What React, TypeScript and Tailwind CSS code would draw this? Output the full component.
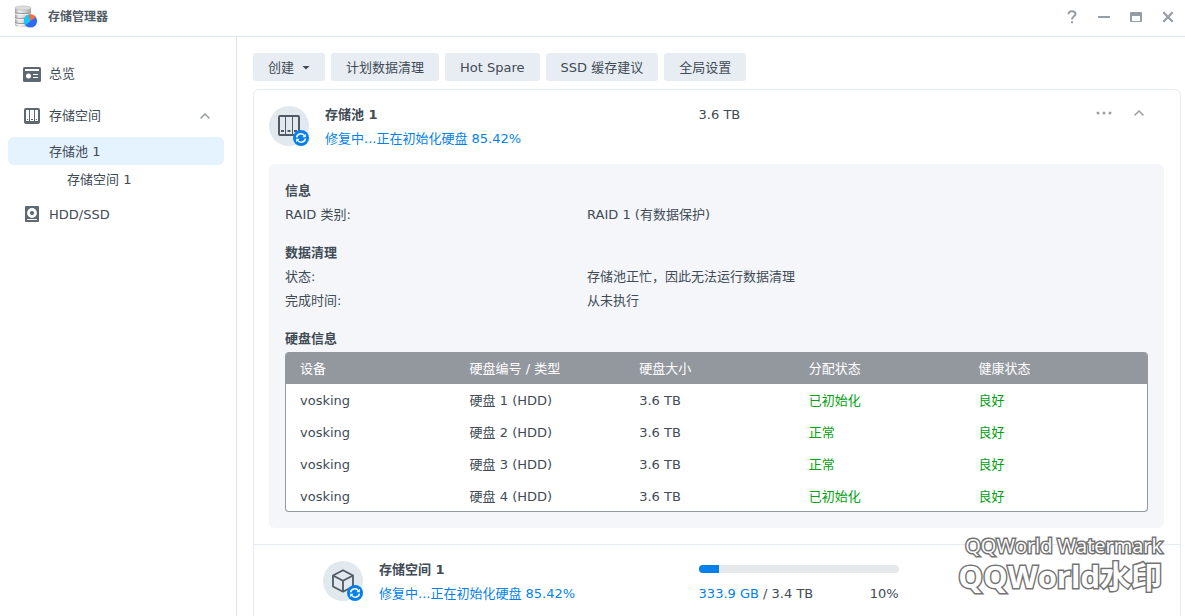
import type { ReactNode } from "react";

const disks = [
    { device: "vosking", name: "硬盘 1 (HDD)", size: "3.6 TB", status: "已初始化", health: "良好" },
    { device: "vosking", name: "硬盘 2 (HDD)", size: "3.6 TB", status: "正常", health: "良好" },
    { device: "vosking", name: "硬盘 3 (HDD)", size: "3.6 TB", status: "正常", health: "良好" },
    { device: "vosking", name: "硬盘 4 (HDD)", size: "3.6 TB", status: "已初始化", health: "良好" },
];

const toolbar = ["创建", "计划数据清理", "Hot Spare", "SSD 缓存建议", "全局设置"];

function AppLogo() {
    return (
        <svg width="24" height="24" viewBox="0 0 24 24" aria-hidden="true">
            <defs>
                <linearGradient id="steel" x1="0" x2="1">
                    <stop offset="0" stopColor="#a3a3a3" />
                    <stop offset="0.25" stopColor="#f0f0f0" />
                    <stop offset="0.6" stopColor="#d2d2d2" />
                    <stop offset="1" stopColor="#a6a6a6" />
                </linearGradient>
            </defs>
            <path d="M1 3v17c0 1.200 3.500 2 8 2s8-.8 8-2V3z" fill="url(#steel)" />
            <ellipse cx="9" cy="3" rx="8" ry="2" fill="#dedede" stroke="#b4b4b4" strokeWidth="0.6" />
            <path d="M1 7c0 1.200 3.500 1.500 8 1.500s8-.3 8-1.500M1 12c0 1.200 3.500 1.500 8 1.500s8-.3 8-1.500M1 17c0 1.200 3.500 1.500 8 1.500s8-.3 8-1.500" fill="none" stroke="#8a8a8a" strokeWidth="0.9" />
            <path d="M1 8.200c0 1.200 3.500 1.500 8 1.500s8-.3 8-1.500M1 13.200c0 1.200 3.500 1.500 8 1.500s8-.3 8-1.500M1 18.200c0 1.200 3.500 1.500 8 1.500s8-.3 8-1.500" fill="none" stroke="#fafafa" strokeWidth="0.9" />
            <circle cx="16.500" cy="16" r="6.600" fill="#2f6bf5" />
            <path d="M16.500 16L14.800 9.600A6.600 6.600 0 0 0 11.400 20.200z" fill="#1cc8f5" />
            <path d="M16.500 16L14.800 9.600A6.600 6.600 0 0 1 21.800 12z" fill="#ff6d33" />
        </svg>
    );
}

function OverviewIcon() {
    return (
        <svg width="18" height="15" viewBox="0 0 18 15" aria-hidden="true">
            <rect width="18" height="15" rx="1.500" fill="#5d6873" />
            <path d="M2 2h14v2H2z" fill="#fff" />
            <circle cx="5.500" cy="9" r="2.500" fill="#fff" />
            <path d="M10 7h5v1h-5zM10 10h5v1h-5z" fill="#fff" />
        </svg>
    );
}

function StorageIcon() {
    return (
        <svg width="16" height="16" viewBox="0 0 16 16" aria-hidden="true">
            <rect width="16" height="16" rx="2" fill="#5d6873" />
            <path d="M2 2h3v11H2zM6 2h4v11H6zM11 2h3v11h-3z" fill="#fff" />
            <path d="M3 11h1v1H3zM7 11h2v1H7zM12 11h1v1h-1z" fill="#5d6873" />
        </svg>
    );
}

function DriveIcon() {
    return (
        <svg width="14" height="16" viewBox="0 0 14 16" aria-hidden="true">
            <rect width="14" height="16" rx="1" fill="#5d6873" />
            <circle cx="7" cy="7" r="3.500" fill="none" stroke="#fff" strokeWidth="2.800" />
            <path d="M2 13h10v1H2z" fill="#fff" />
        </svg>
    );
}

function Chevron() {
    return (
        <svg width="10" height="6" viewBox="0 0 10 6" fill="none" stroke="#9ca1a7" strokeWidth="1.500" aria-hidden="true">
            <path d="M0.600 5.400L5 1l4.400 4.400" />
        </svg>
    );
}

function PoolGlyph() {
    return (
        <svg width="24" height="24" viewBox="0 0 24 24" aria-hidden="true">
            <rect x="2" y="2" width="20" height="19" rx="1" fill="none" stroke="#4f5a65" strokeWidth="2" />
            <path d="M8 2h1v18H8zM15 2h1v18h-1z" fill="#4f5a65" />
            <path d="M4 16h3v2H4zM10.500 16h3v2h-3zM17 16h3v2h-3z" fill="#4f5a65" />
        </svg>
    );
}

function VolumeGlyph() {
    return (
        <svg width="24" height="24" viewBox="0 0 24 24" fill="none" stroke="#4f5a65" strokeWidth="1.800" strokeLinejoin="round" aria-hidden="true">
            <path d="M12 1.300L22 6.500v11L12 22.700 2 17.500v-11z" />
            <path d="M2 6.500L12 11.700l10-5.200M12 11.700v11" />
        </svg>
    );
}

function StatusIcon({ children }: { children: ReactNode }) {
    return (
        <div className="relative mt-[3px] flex size-10 shrink-0 items-center justify-center rounded-full bg-[#e1e8ee]">
            {children}
            <svg className="absolute right-0 bottom-0" width="16" height="16" viewBox="0 0 16 16" aria-hidden="true">
                <circle cx="8" cy="8" r="8" fill="#057feb" />
                <path d="M3.600 7.300C4 3.600 9 2.500 11.400 5.600M12.400 8.700C12 12.400 7 13.500 4.600 10.400" fill="none" stroke="#fff" strokeWidth="1.500" />
                <path d="M12.800 3.800v3.400H9.400zM3.200 12.200V8.800h3.400z" fill="#fff" />
            </svg>
        </div>
    );
}

function InfoRow({ label, value }: { label: string; value: string }) {
    return (
        <div className="flex">
            <dt className="w-[35%]">{label}</dt>
            <dd>{value}</dd>
        </div>
    );
}

function Sidebar() {
    return (
        <nav className="w-[237px] shrink-0 border-r border-[#dfe6ee] pt-[23px] pr-3 pl-2">
            <a href="#overview" className="mb-[14px] flex h-7 items-center rounded">
                <span className="flex w-[41px] justify-center pl-[7px]"><OverviewIcon /></span>
                总览
            </a>
            <a href="#storage" className="mb-[7px] flex h-7 items-center rounded pr-[14px]">
                <span className="flex w-[41px] justify-center pl-[7px]"><StorageIcon /></span>
                存储空间
                <span className="ml-auto"><Chevron /></span>
            </a>
            <a href="#pool-1" className="flex h-7 items-center rounded-md bg-[#e5f2ff] pt-0.5 pl-[41px]">存储池 1</a>
            <a href="#volume-1" className="mb-[7px] flex h-7 items-center rounded-md pt-0.5 pl-[59px]">存储空间 1</a>
            <a href="#hdd" className="flex h-7 items-center rounded pt-0.5">
                <span className="flex w-[41px] justify-center pb-0.5 pl-[7px]"><DriveIcon /></span>
                HDD/SSD
            </a>
        </nav>
    );
}

function WindowControls() {
    return (
        <div className="ml-auto flex pr-px text-[#969ca3]">
            <button aria-label="帮助" className="flex size-8 items-center justify-center">
                <svg width="10" height="14" viewBox="0 0 10 14" fill="none" stroke="currentColor" strokeWidth="2">
                    <path d="M1.500 4.300C1.500 2.300 2.900 1.300 5 1.300s3.500 1.100 3.500 2.800C8.500 6.300 5 6.400 5 9.500" />
                    <path d="M5 11.200v2" />
                </svg>
            </button>
            <button aria-label="最小化" className="flex size-8 items-center justify-center">
                <svg width="12" height="2" viewBox="0 0 12 2"><rect width="12" height="2" rx="0.500" fill="currentColor" /></svg>
            </button>
            <button aria-label="最大化" className="flex size-8 items-center justify-center">
                <svg width="12" height="10" viewBox="0 0 12 10"><path fillRule="evenodd" d="M1 0h10a1 1 0 0 1 1 1v8a1 1 0 0 1-1 1H1a1 1 0 0 1-1-1V1a1 1 0 0 1 1-1zM2 4v5h8V4z" fill="currentColor" /></svg>
            </button>
            <button aria-label="关闭" className="flex size-8 items-center justify-center">
                <svg width="12" height="12" viewBox="0 0 12 12" stroke="currentColor" strokeWidth="2.200"><path d="M1.300 1.300l9.400 9.400M10.700 1.300l-9.400 9.400" /></svg>
            </button>
        </div>
    );
}

function DiskTable() {
    return (
        <div className="mt-px overflow-hidden rounded border border-t-0 border-[#93989f] bg-white">
            <table className="w-full table-fixed text-left">
                <thead className="bg-[#93989f] text-white">
                    <tr className="h-8">
                        <th className="w-[19.7%] pt-0.5 pl-[14px] font-normal">设备</th>
                        <th className="w-[19.7%] pt-0.5 pl-[14px] font-normal">硬盘编号 / 类型</th>
                        <th className="w-[19.7%] pt-0.5 pl-[14px] font-normal">硬盘大小</th>
                        <th className="w-[19.7%] pt-0.5 pl-[14px] font-normal">分配状态</th>
                        <th className="pt-0.5 pl-[14px] font-normal">健康状态</th>
                    </tr>
                </thead>
                <tbody>
                    {disks.map((disk) => (
                        <tr key={disk.name} className="h-8 last:h-[31px]">
                            <td className="pt-0.5 pl-[14px]">{disk.device}</td>
                            <td className="pt-0.5 pl-[14px]">{disk.name}</td>
                            <td className="pt-0.5 pl-[14px]">{disk.size}</td>
                            <td className="pt-0.5 pl-[14px] text-[#00a111]">{disk.status}</td>
                            <td className="pt-0.5 pl-[14px] text-[#00a111]">{disk.health}</td>
                        </tr>
                    ))}
                </tbody>
            </table>
        </div>
    );
}

function PoolCard() {
    return (
        <section className="rounded-md border border-[#e6ebf1] pb-8">
            <div className="pt-[13px] pr-4 pl-[15px]">
                <header className="flex">
                    <div className="flex w-[48%] items-start gap-4">
                        <StatusIcon><PoolGlyph /></StatusIcon>
                        <div>
                            <h2 className="font-bold">存储池 1</h2>
                            <p className="text-[#057feb]">修复中...正在初始化硬盘 85.42%</p>
                        </div>
                    </div>
                    <p>3.6 TB</p>
                    <div className="ml-auto flex items-start gap-[11px] pr-[13px]">
                        <button aria-label="更多" className="flex h-5 w-6 items-center justify-center">
                            <svg width="16" height="4" viewBox="0 0 16 4" fill="#9ca1a7">
                                <circle cx="2" cy="2" r="1.500" />
                                <circle cx="8" cy="2" r="1.500" />
                                <circle cx="14" cy="2" r="1.500" />
                            </svg>
                        </button>
                        <button aria-label="折叠" className="flex h-5 w-6 items-center justify-center"><Chevron /></button>
                    </div>
                </header>

                <div className="mt-[13px] mb-4 rounded-md bg-[#f4f6fa] px-4 pt-[15px] pb-4">
                    <h3 className="font-bold">信息</h3>
                    <dl>
                        <InfoRow label="RAID 类别:" value="RAID 1 (有数据保护)" />
                    </dl>
                    <h3 className="mt-[14px] font-bold">数据清理</h3>
                    <dl>
                        <InfoRow label="状态:" value="存储池正忙，因此无法运行数据清理" />
                        <InfoRow label="完成时间:" value="从未执行" />
                    </dl>
                    <h3 className="mt-[14px] font-bold">硬盘信息</h3>
                    <DiskTable />
                </div>
            </div>

            <div className="flex border-t border-[#e6ebf1] pt-[13px] pr-4 pl-[15px]">
                <div className="flex w-[48%] items-start gap-4 pl-[54px]">
                    <StatusIcon><VolumeGlyph /></StatusIcon>
                    <div>
                        <h2 className="font-bold">存储空间 1</h2>
                        <p className="text-[#057feb]">修复中...正在初始化硬盘 85.42%</p>
                    </div>
                </div>
                <div className="w-[200px]">
                    <div className="flex h-6 items-center pb-0.5">
                        <div role="progressbar" aria-label="存储空间 1" aria-valuenow={10} className="h-2 w-full overflow-hidden rounded-full bg-[#e6e8eb]">
                            <div className="h-full w-[10%] bg-[#057feb]" />
                        </div>
                    </div>
                    <div className="flex justify-between">
                        <p><span className="text-[#057feb]">333.9 GB</span> / 3.4 TB</p>
                        <p>10%</p>
                    </div>
                </div>
            </div>
        </section>
    );
}

export default function App() {
    return (
        <div className="relative flex h-screen flex-col overflow-hidden bg-white font-['DejaVu_Sans','Noto_Sans_CJK_SC',sans-serif] text-[13px] leading-6 text-[#414b55]">
            <header className="flex h-[37px] shrink-0 items-center border-b border-[#dfe6ee] pb-0.5 pl-[14px]">
                <AppLogo />
                <h1 className="ml-2.5 text-xs font-bold text-[#505a64]">存储管理器</h1>
                <WindowControls />
            </header>

            <div className="flex min-h-0 flex-1">
                <Sidebar />
                <main className="min-w-0 flex-1 overflow-hidden pt-4 pr-1 pl-4">
                    <div className="mb-2 flex gap-1.5">
                        {toolbar.map((label, i) => (
                            <button key={label} className="flex h-7 items-center rounded-[3px] bg-[#e8edf4] px-[15px] pt-0.5">
                                {label}
                                {i === 0 && (
                                    <svg className="ml-2" width="8" height="4" viewBox="0 0 8 4" aria-hidden="true"><path d="M0.500 0h7L4 3.500z" fill="#414b55" /></svg>
                                )}
                            </button>
                        ))}
                    </div>
                    <PoolCard />
                </main>
            </div>

            {/* Watermark */}
            <div className="pointer-events-none absolute right-[23px] bottom-[25px] flex flex-col items-end font-['Open_Sans','Noto_Sans_CJK_SC',sans-serif] whitespace-nowrap text-white [-webkit-text-stroke:3px_#737373] [paint-order:stroke_fill]">
                <span className="text-[20px] leading-[30px]">QQWorld Watermark</span>
                <span className="text-[31px] leading-[30px] font-bold">QQWorld水印</span>
            </div>
        </div>
    );
}
